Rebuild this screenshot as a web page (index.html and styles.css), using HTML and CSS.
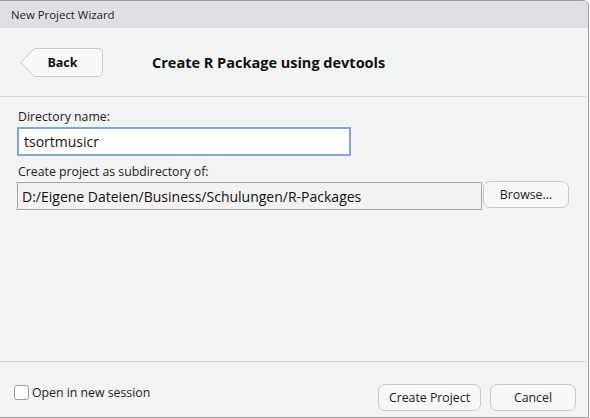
FILE: index.html
```html
<!DOCTYPE html>
<html>
<head>
<meta charset="utf-8">
<link rel="stylesheet" href="styles.css">
</head>
<body>
<div class="window">
  <div class="titlebar">New Project Wizard</div>
  <div class="header">
    <button class="back">
      <svg class="back-shape" width="84" height="30" viewBox="0 0 84 30">
        <path d="M0.8,14.5 L14.5,0.5 H78.5 a4,4 0 0 1 4,4 V24.5 a4,4 0 0 1 -4,4 H14.5 Z" fill="#f8f8f8" stroke="#c9c9c9" stroke-width="1"/>
      </svg>
      <span class="back-label">Back</span>
    </button>
    <h1 class="title">Create R Package using devtools</h1>
  </div>
  <div class="content">
    <label class="label">Directory name:</label>
    <div class="input active">tsortmusicr</div>
    <label class="label second">Create project as subdirectory of:</label>
    <div class="row">
      <div class="input path">D:/Eigene Dateien/Business/Schulungen/R-Packages</div>
      <button class="btn browse">Browse...</button>
    </div>
  </div>
  <div class="footer">
    <label class="check"><span class="box"></span>Open in new session</label>
    <div class="actions">
      <button class="btn create">Create Project</button>
      <button class="btn cancel">Cancel</button>
    </div>
  </div>
</div>
</body>
</html>
```
FILE: styles.css
```css
html, body {
  margin: 0;
  padding: 0;
  background: #ffffff;
}
body {
  font-family: "Open Sans", "Noto Sans", sans-serif;
  color: #1a1a1a;
}
.window {
  width: 589px;
  height: 418px;
  box-sizing: border-box;
  border-top: 1px solid #9a9a9a;
  border-right: 1px solid #9a9a9a;
  border-bottom: 1px solid #9a9a9a;
  border-top-right-radius: 6px;
  background: #f2f3f3;
  display: flex;
  flex-direction: column;
  overflow: hidden;
}
.titlebar {
  height: 27px;
  background: #dfe0e4;
  font-size: 11.4px;
  color: #222;
  padding-left: 11px;
  display: flex;
  align-items: center;
  flex-shrink: 0;
}
.header {
  height: 69px;
  box-sizing: border-box;
  border-bottom: 1px solid #d6d6d6;
  margin-right: 2px;
  display: flex;
  align-items: center;
  padding-left: 20px;
  flex-shrink: 0;
}
.back {
  display: grid;
  padding: 0;
  margin: 1px 0 0 0;
  border: 0;
  background: none;
  font-family: inherit;
  width: 84px;
  height: 30px;
}
.back-shape, .back-label {
  grid-area: 1 / 1;
}
.back-label {
  align-self: center;
  justify-self: center;
  font-weight: 700;
  font-size: 12.5px;
  color: #111;
  margin-left: 1px;
  margin-top: -1px;
}
.title {
  margin: 1px 0 0 48px;
  font-size: 14.5px;
  font-weight: 700;
  color: #111;
}
.content {
  flex: 1;
  padding: 12px 0 0 17px;
  display: flex;
  flex-direction: column;
  align-items: flex-start;
}
.label {
  font-size: 12.3px;
  color: #222;
  padding-left: 1px;
  line-height: 16px;
  margin-bottom: 2px;
}
.label.second {
  margin-top: 8px;
}
.input {
  box-sizing: border-box;
  font-size: 14px;
  display: flex;
  align-items: center;
  color: #111;
}
.input.active {
  width: 334px;
  height: 29px;
  border: 2px solid #86a5d6;
  background: #ffffff;
  padding-left: 5px;
}
.row {
  display: flex;
  align-items: flex-start;
  gap: 1px;
}
.input.path {
  width: 465px;
  height: 28px;
  border: 1px solid #a6a6a6;
  background: #f2f2f2;
  padding-left: 4px;
}
.btn {
  font-family: inherit;
  font-size: 12.3px;
  color: #222;
  background: #f7f7f7;
  border: 1px solid #c9c9c9;
  border-radius: 7px;
  height: 27px;
  padding: 0;
}
.browse {
  width: 86px;
  margin-top: -1px;
}
.footer {
  height: 56px;
  box-sizing: border-box;
  border-top: 1px solid #d0d0d0;
  margin-right: 2px;
  display: flex;
  align-items: center;
  justify-content: space-between;
  padding: 16px 10px 0 14px;
  flex-shrink: 0;
}
.check {
  display: flex;
  align-items: center;
  font-size: 12.3px;
  color: #222;
  margin-top: -10px;
}
.box {
  width: 13px;
  height: 13px;
  border: 1px solid #9d9d9d;
  border-radius: 3px;
  background: #fff;
  margin-right: 3px;
}
.actions {
  display: flex;
  gap: 9px;
}
.create {
  width: 103px;
}
.cancel {
  width: 86px;
}
```
